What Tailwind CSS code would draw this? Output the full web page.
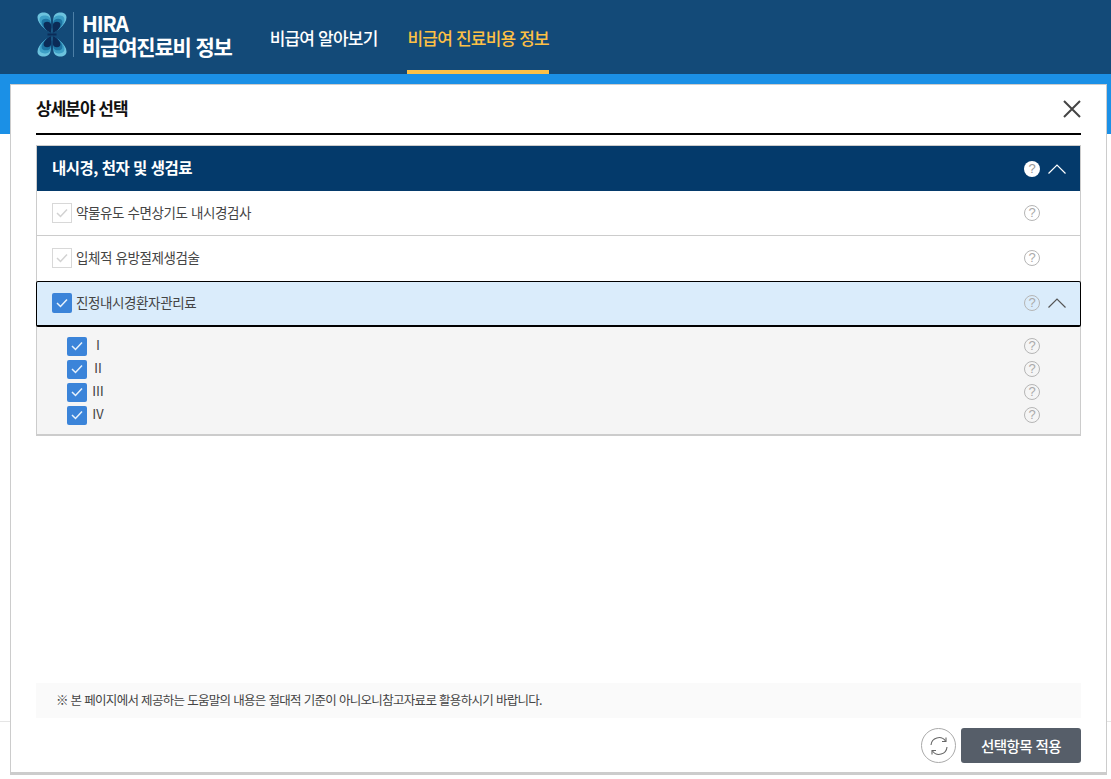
<!DOCTYPE html>
<html lang="ko">
<head>
<meta charset="UTF-8" />
<title>비급여진료비 정보</title>
<script src="https://cdn.jsdelivr.net/npm/@tailwindcss/browser@4"></script>
</head>
<body class="font-['Noto_Sans_CJK_KR','Noto_Sans',sans-serif] bg-white">
<div class="relative w-[1111px] h-[779px] overflow-hidden">
	<!-- page behind the modal -->
	<header class="h-[74px] bg-[#134a78] flex pl-[37px]">
		<div class="flex items-start pt-[12px]">
			<svg width="30" height="45" viewBox="0 0 30 45">
				<defs>
					<path id="lobe" d="M15 22.500C13 19 10.500 19 8 17C3 13 0.500 9 0.500 5.500C0.500 2 3 0.500 6.500 0.500C10 0.500 13 2 13.500 6C14 11 13.500 17 15 22.500Z"/>
					<g id="petals">
						<use href="#lobe"/>
						<use href="#lobe" transform="matrix(-1 0 0 1 30 0)"/>
						<use href="#lobe" transform="matrix(1 0 0 -1 0 45)"/>
						<use href="#lobe" transform="matrix(-1 0 0 -1 30 45)"/>
					</g>
				</defs>
				<use href="#petals" fill="#6cc3de"/>
				<use href="#petals" fill="#3d9fc6" transform="translate(15 22.500) scale(0.86) translate(-15 -22.500)"/>
				<use href="#petals" fill="#1c74a3" transform="translate(15 22.500) scale(0.72) translate(-15 -22.500)"/>
				<use href="#petals" fill="#0b2b57" transform="translate(15 22.500) scale(0.58) translate(-15 -22.500)"/>
				<rect x="10.500" y="21.500" width="9" height="2" fill="#0b2b57"/>
			</svg>
			<div class="w-px h-[45px] ml-[6px] bg-[#4d7fa6]"></div>
			<div class="ml-[8px] text-white font-bold text-[21px] leading-[23px] tracking-[-1.2px]">
				<div>HIRA</div>
				<div>비급여진료비 정보</div>
			</div>
		</div>
		<nav class="flex ml-[38px] text-[17px] font-medium tracking-[-0.8px]">
			<a class="h-[74px] pt-[26px] leading-[24px] text-white">비급여 알아보기</a>
			<a class="h-[74px] pt-[26px] leading-[24px] ml-[30px] text-[#fdc045] border-b-4 border-[#fdc045]">비급여 진료비용 정보</a>
		</nav>
	</header>
	<div class="h-[60px] bg-[#1b90e6]"></div>
	<div class="mt-[587px] border-t border-[#e5e5e5]"></div>

	<!-- modal -->
	<section class="absolute left-[10px] top-[84px] w-[1097px] h-[691px] bg-white border border-[#cccccc] border-b-[3px] flex flex-col px-[25px]">
		<div class="h-[50px] shrink-0 border-b-2 border-black flex items-center justify-between">
			<h2 class="text-[17px] font-bold text-[#111] tracking-[-1px] leading-[24px] -mt-[3px]">상세분야 선택</h2>
			<svg width="18" height="18" viewBox="0 0 18 18" fill="none" stroke="#444" stroke-width="2"><path d="M1 1L17 17M17 1L1 17"/></svg>
		</div>

		<div class="mt-[10px] border border-[#cccccc] border-b-2">
			<div class="h-[45px] bg-[#043a6b] flex items-center justify-between pl-[15px] pr-[14px] text-white">
				<span class="text-[15.500px] font-bold tracking-[-0.5px] mb-[2px]">내시경, 천자 및 생검료</span>
				<div class="flex items-center gap-[8px]">
					<span class="w-[16px] h-[16px] rounded-full bg-white text-[#999] text-[13px] leading-[16px] text-center font-['Liberation_Sans']">?</span>
					<svg width="18" height="10" viewBox="0 0 18 10" fill="none" stroke="#fff" stroke-width="1.2"><path d="M0.500 9.500L9 1L17.500 9.500"/></svg>
				</div>
			</div>

			<div class="h-[45px] border-b border-[#cccccc] flex items-center justify-between pl-[15px] pr-[40px]">
				<div class="flex items-center gap-[4px]">
					<span class="w-[20px] h-[20px] border border-[#d8d8d8] flex items-center justify-center">
						<svg width="12" height="10" viewBox="0 0 12 10" fill="none" stroke="#d2d2d2" stroke-width="1.500"><path d="M1 5L4.500 8.500L11 1.500"/></svg>
					</span>
					<span class="text-[13.500px] text-[#444] tracking-[-0.4px] mb-[2px]">약물유도 수면상기도 내시경검사</span>
				</div>
				<span class="w-[16px] h-[16px] rounded-full border border-[#b5b5b5] text-[#aaa] text-[13px] leading-[14px] text-center font-['Liberation_Sans']">?</span>
			</div>

			<div class="h-[45px] pb-[1px] flex items-center justify-between pl-[15px] pr-[40px]">
				<div class="flex items-center gap-[4px]">
					<span class="w-[20px] h-[20px] border border-[#d8d8d8] flex items-center justify-center">
						<svg width="12" height="10" viewBox="0 0 12 10" fill="none" stroke="#d2d2d2" stroke-width="1.500"><path d="M1 5L4.500 8.500L11 1.500"/></svg>
					</span>
					<span class="text-[13.500px] text-[#444] tracking-[-0.4px] mb-[2px]">입체적 유방절제생검술</span>
				</div>
				<span class="w-[16px] h-[16px] rounded-full border border-[#b5b5b5] text-[#aaa] text-[13px] leading-[14px] text-center font-['Liberation_Sans']">?</span>
			</div>

			<div class="h-[46px] pb-[1px] -mx-px bg-[#daecfb] border border-black border-b-2 rounded-[2px] flex items-center justify-between pl-[15px] pr-[14px]">
				<div class="flex items-center gap-[4px]">
					<span class="w-[20px] h-[20px] rounded-[2px] bg-[#3b84d9] flex items-center justify-center">
						<svg width="12" height="10" viewBox="0 0 12 10" fill="none" stroke="#e8f2fc" stroke-width="1.500"><path d="M1 5L4.500 8.500L11 1.500"/></svg>
					</span>
					<span class="text-[13.500px] text-[#444] tracking-[-0.4px] mb-[2px]">진정내시경환자관리료</span>
				</div>
				<div class="flex items-center gap-[8px]">
					<span class="w-[16px] h-[16px] rounded-full border border-[#b5b5b5] text-[#aaa] text-[13px] leading-[14px] text-center font-['Liberation_Sans']">?</span>
					<svg width="18" height="10" viewBox="0 0 18 10" fill="none" stroke="#555" stroke-width="1.2"><path d="M0.500 9.500L9 1L17.500 9.500"/></svg>
				</div>
			</div>

			<div class="bg-[#f5f5f5] h-[107px] pt-[9px] pl-[30px] pr-[40px] flex flex-col gap-[3px]">
				<div class="h-[20px] flex items-center justify-between">
					<div class="flex items-center">
						<span class="w-[20px] h-[19px] rounded-[2px] bg-[#3b84d9] flex items-center justify-center">
							<svg width="12" height="10" viewBox="0 0 12 10" fill="none" stroke="#e8f2fc" stroke-width="1.500"><path d="M1 5L4.500 8.500L11 1.500"/></svg>
						</span>
						<span class="w-[22px] text-center text-[13px] text-[#444] mb-[2px]">Ⅰ</span>
					</div>
					<span class="w-[16px] h-[16px] rounded-full border border-[#b5b5b5] text-[#aaa] text-[13px] leading-[14px] text-center font-['Liberation_Sans']">?</span>
				</div>
				<div class="h-[20px] flex items-center justify-between">
					<div class="flex items-center">
						<span class="w-[20px] h-[19px] rounded-[2px] bg-[#3b84d9] flex items-center justify-center">
							<svg width="12" height="10" viewBox="0 0 12 10" fill="none" stroke="#e8f2fc" stroke-width="1.500"><path d="M1 5L4.500 8.500L11 1.500"/></svg>
						</span>
						<span class="w-[22px] text-center text-[13px] text-[#444] mb-[2px]">Ⅱ</span>
					</div>
					<span class="w-[16px] h-[16px] rounded-full border border-[#b5b5b5] text-[#aaa] text-[13px] leading-[14px] text-center font-['Liberation_Sans']">?</span>
				</div>
				<div class="h-[20px] flex items-center justify-between">
					<div class="flex items-center">
						<span class="w-[20px] h-[19px] rounded-[2px] bg-[#3b84d9] flex items-center justify-center">
							<svg width="12" height="10" viewBox="0 0 12 10" fill="none" stroke="#e8f2fc" stroke-width="1.500"><path d="M1 5L4.500 8.500L11 1.500"/></svg>
						</span>
						<span class="w-[22px] text-center text-[13px] text-[#444] mb-[2px]">Ⅲ</span>
					</div>
					<span class="w-[16px] h-[16px] rounded-full border border-[#b5b5b5] text-[#aaa] text-[13px] leading-[14px] text-center font-['Liberation_Sans']">?</span>
				</div>
				<div class="h-[20px] flex items-center justify-between">
					<div class="flex items-center">
						<span class="w-[20px] h-[19px] rounded-[2px] bg-[#3b84d9] flex items-center justify-center">
							<svg width="12" height="10" viewBox="0 0 12 10" fill="none" stroke="#e8f2fc" stroke-width="1.500"><path d="M1 5L4.500 8.500L11 1.500"/></svg>
						</span>
						<span class="w-[22px] text-center text-[13px] text-[#444] mb-[2px]">Ⅳ</span>
					</div>
					<span class="w-[16px] h-[16px] rounded-full border border-[#b5b5b5] text-[#aaa] text-[13px] leading-[14px] text-center font-['Liberation_Sans']">?</span>
				</div>
			</div>
		</div>

		<div class="mt-auto h-[35px] bg-[#fafafa] pl-[20px] flex items-center text-[12.500px] text-[#444] tracking-[-0.69px]">※ 본 페이지에서 제공하는 도움말의 내용은 절대적 기준이 아니오니참고자료로 활용하시기 바랍니다.</div>
		<div class="h-[45px] mb-[9px] pt-[10px] flex justify-end items-start gap-[5px]">
			<button class="w-[35px] h-[35px] rounded-full border border-[#aaa] flex items-center justify-center">
				<svg width="20" height="20" viewBox="0 0 20 20" fill="none" stroke="#666" stroke-width="1.100">
					<path d="M2 9A8 8 0 0 1 16.500 5"/><path d="M17 1.500V5.500H13"/>
					<path d="M18 11A8 8 0 0 1 3.500 15"/><path d="M3 18.500V14.500H7"/>
				</svg>
			</button>
			<button class="w-[120px] h-[35px] rounded-[3px] bg-[#565e69] text-white text-[14.500px] font-medium tracking-[-0.55px]">선택항목 적용</button>
		</div>
	</section>
</div>
</body>
</html>
